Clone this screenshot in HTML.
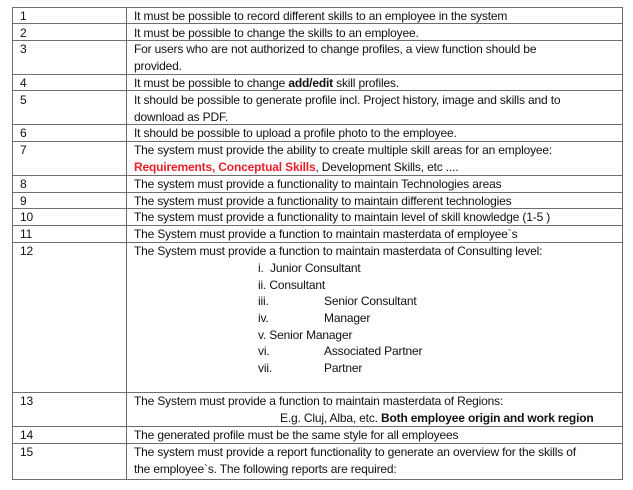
<!DOCTYPE html>
<html><head><meta charset="utf-8"><style>
*{margin:0;padding:0;box-sizing:border-box}
body{width:633px;height:490px;background:#fff;position:relative;overflow:hidden;font-family:"Liberation Sans",sans-serif;font-size:12px;letter-spacing:-0.17px;color:#111}
.h{position:absolute;left:12px;width:611px;height:1px;background:#6e6e6e}
.v{position:absolute;top:7px;width:1px;height:473px;background:#6e6e6e}
.t{position:absolute;white-space:nowrap;line-height:16.7px;margin-top:1px}
.r{color:#e8202a;font-weight:bold}
b{font-weight:bold}
</style></head><body>
<div class="v" style="left:12px"></div>
<div class="v" style="left:126px"></div>
<div class="v" style="left:622px"></div>
<div class="h" style="top:7px"></div>
<div class="h" style="top:23px"></div>
<div class="h" style="top:40px"></div>
<div class="h" style="top:74px"></div>
<div class="h" style="top:90px"></div>
<div class="h" style="top:124px"></div>
<div class="h" style="top:141px"></div>
<div class="h" style="top:175px"></div>
<div class="h" style="top:192px"></div>
<div class="h" style="top:208px"></div>
<div class="h" style="top:225px"></div>
<div class="h" style="top:242px"></div>
<div class="h" style="top:392px"></div>
<div class="h" style="top:426px"></div>
<div class="h" style="top:443px"></div>
<div class="h" style="top:479px"></div>

<div class="t" style="left:20px;top:7px">1</div>
<div class="t" style="left:20px;top:24px">2</div>
<div class="t" style="left:20px;top:40px">3</div>
<div class="t" style="left:20px;top:74px">4</div>
<div class="t" style="left:20px;top:91px">5</div>
<div class="t" style="left:20px;top:124px">6</div>
<div class="t" style="left:20px;top:141px">7</div>
<div class="t" style="left:20px;top:175px">8</div>
<div class="t" style="left:20px;top:192px">9</div>
<div class="t" style="left:20px;top:208px">10</div>
<div class="t" style="left:20px;top:225px">11</div>
<div class="t" style="left:20px;top:242px">12</div>
<div class="t" style="left:20px;top:392px">13</div>
<div class="t" style="left:20px;top:426px">14</div>
<div class="t" style="left:20px;top:443px">15</div>

<div class="t" style="left:134px;top:7px">It must be possible to record different skills to an employee in the system</div>
<div class="t" style="left:134px;top:24px">It must be possible to change the skills to an employee.</div>
<div class="t" style="left:134px;top:40px">For users who are not authorized to change profiles, a view function should be<br>provided.</div>
<div class="t" style="left:134px;top:74px">It must be possible to change <b>add/edit</b> skill profiles.</div>
<div class="t" style="left:134px;top:91px">It should be possible to generate profile incl. Project history, image and skills and to<br>download as PDF.</div>
<div class="t" style="left:134px;top:124px">It should be possible to upload a profile photo to the employee.</div>
<div class="t" style="left:134px;top:141px">The system must provide the ability to create multiple skill areas for an employee:<br><span class="r">Requirements, Conceptual Skills</span>, Development Skills, etc ....</div>
<div class="t" style="left:134px;top:175px">The system must provide a functionality to maintain Technologies areas</div>
<div class="t" style="left:134px;top:192px">The system must provide a functionality to maintain different technologies</div>
<div class="t" style="left:134px;top:208px">The system must provide a functionality to maintain level of skill knowledge (1-5 )</div>
<div class="t" style="left:134px;top:225px">The System must provide a function to maintain masterdata of employee`s</div>
<div class="t" style="left:134px;top:242px">The System must provide a function to maintain masterdata of Consulting level:</div>
<div class="t" style="left:258px;top:259px">i.&nbsp; Junior Consultant</div>
<div class="t" style="left:258px;top:276px">ii. Consultant</div>
<div class="t" style="left:258px;top:292px">iii.</div><div class="t" style="left:324px;top:292px">Senior Consultant</div>
<div class="t" style="left:258px;top:309px">iv.</div><div class="t" style="left:324px;top:309px">Manager</div>
<div class="t" style="left:258px;top:326px">v. Senior Manager</div>
<div class="t" style="left:258px;top:342px">vi.</div><div class="t" style="left:324px;top:342px">Associated Partner</div>
<div class="t" style="left:258px;top:359px">vii.</div><div class="t" style="left:324px;top:359px">Partner</div>
<div class="t" style="left:134px;top:392px">The System must provide a function to maintain masterdata of Regions:</div>
<div class="t" style="left:280px;top:409px">E.g. Cluj, Alba, etc. <b>Both employee origin and work region</b></div>
<div class="t" style="left:134px;top:426px">The generated profile must be the same style for all employees</div>
<div class="t" style="left:134px;top:443px">The system must provide a report functionality to generate an overview for the skills of<br>the employee`s. The following reports are required:</div>
</body></html>
